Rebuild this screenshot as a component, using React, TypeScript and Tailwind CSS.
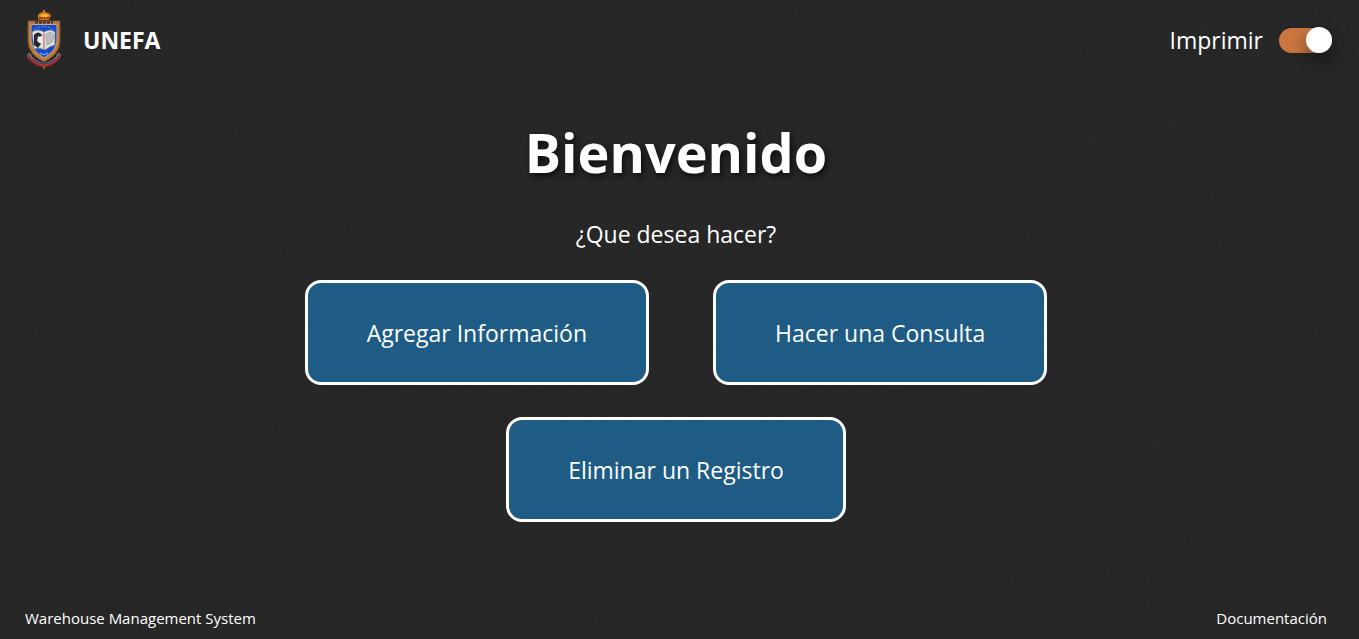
import { useState } from "react";

const actionClass =
  "flex h-[105px] items-center justify-center rounded-2xl border-3 border-white bg-[#1e5c85] px-[59px] text-[23px] leading-8 whitespace-nowrap hover:bg-[#256c9b]";

function Leather() {
  return (
    <svg className="pointer-events-none absolute inset-0 -z-10 h-full w-full" aria-hidden="true">
      <filter id="leather" x="0" y="0" width="100%" height="100%" colorInterpolationFilters="sRGB">
        <feTurbulence type="fractalNoise" baseFrequency="0.2" numOctaves="3" seed="4" result="noise" />
        <feDiffuseLighting in="noise" surfaceScale="0.22" diffuseConstant="1" lightingColor="#2d2d2d">
          <feDistantLight azimuth="235" elevation="60" />
        </feDiffuseLighting>
      </filter>
      <rect width="100%" height="100%" filter="url(#leather)" />
    </svg>
  );
}

function Crest() {
  return (
    <svg className="h-[60px] w-9" viewBox="0 0 36 60" aria-hidden="true">
      <path d="M1 44 L4 43 Q7 51 18 53 Q29 51 32 43 L35 44 Q34 50 28 53 Q18 59 8 53 Q2 50 1 44Z" fill="#b8862f" />
      <path d="M2 44 Q7 53 18 54 Q29 53 34 44" fill="none" stroke="#2b3f96" strokeWidth="1.5" />
      <path d="M2 47 Q8 55 18 56 Q28 55 34 47" fill="none" stroke="#b3202c" strokeWidth="2" />
      <path d="M13 10 Q10 5 14 3 Q16 2 17 2 L17 0 H19 V2 Q25 3 25 6 L23 10Z" fill="#cf7522" />
      <path d="M13 8 H24" stroke="#8d3420" strokeWidth="1.5" />
      <ellipse cx="18.5" cy="5.5" rx="4" ry="1.8" fill="#ffb52e" />
      <path d="M2 11 H34 V31 Q34 44 18 52 Q2 44 2 31Z" fill="#b97b42" stroke="#7c5030" />
      <path d="M5 14.5 H31 V31 Q30 41 18 48 Q6 41 5 31Z" fill="#124bd0" stroke="#d9a86c" />
      <path d="M9 12.5 H27" stroke="#382c28" strokeWidth="2" strokeDasharray="3 1" />
      <path d="M8 20 Q18 13 28 20" fill="none" stroke="#84b4ee" strokeWidth="1.2" strokeDasharray="1 2" />
      <path d="M6 22 Q12 18 18 22 Q24 18 29 22 V35 Q24 36 19 40 Q13 37 8 39Z" fill="#dfdfdc" stroke="#777" strokeWidth=".7" />
      <path d="M8 25 Q12 20 16 25 L15 28 L12 26 L11 31 L15 34 L12 38 L8 35Z" fill="#27272b" />
      <path d="M12 27 L16 26 V32 L13 33Z" fill="#eee" />
      <path d="M20 25 Q24 20 28 25 Q28 33 21 35Z" fill="#bdbdba" stroke="#999" strokeWidth=".6" />
      <path d="M18 23 V40" stroke="#b95b65" />
      <path d="M14 43 Q18 46 22 43" fill="none" stroke="#7ba9df" strokeWidth="1.2" />
      <path d="M16 56 H20 L18 60Z" fill="#a64f25" />
    </svg>
  );
}

export default function App() {
  const [print, setPrint] = useState(true);

  return (
    <div className="relative isolate flex min-h-screen flex-col bg-[#272727] font-['Open_Sans','Noto_Sans',sans-serif] text-white">
      <Leather />
      <header className="flex h-20 items-center justify-between pr-[27px] pl-[26px]">
        <a href="#" className="flex items-center gap-[21px]">
          <Crest />
          <span className="text-[23px] leading-8 font-bold">UNEFA</span>
        </a>
        <label className="flex cursor-pointer items-center gap-4 text-[23px] leading-8">
          Imprimir
          <input
            type="checkbox"
            role="switch"
            checked={print}
            onChange={(event) => setPrint(event.target.checked)}
            className="flex h-[25px] w-[53px] cursor-pointer appearance-none items-center rounded-full bg-neutral-500 before:size-[26px] before:shrink-0 before:rounded-full before:bg-white before:shadow-[0_8px_20px_rgba(0,0,0,0.5)] checked:justify-end checked:bg-[#cd7740]"
          />
        </label>
      </header>

      <main className="flex flex-1 flex-col items-center pt-8 pr-[7px]">
        <h1 className="text-[54px] leading-20 font-bold [text-shadow:2px_3px_6px_#000000b3]">Bienvenido</h1>
        <p className="mt-[26px] text-[23px] leading-8">¿Que desea hacer?</p>
        <div className="mt-[30px] flex max-w-[860px] flex-wrap justify-center gap-x-16 gap-y-8">
          <button type="button" className={actionClass}>Agregar Información</button>
          <button type="button" className={actionClass}>Hacer una Consulta</button>
          <button type="button" className={actionClass}>Eliminar un Registro</button>
        </div>
      </main>

      <footer className="flex items-center justify-between px-[25px] pt-6 pr-8 pb-[9px] text-[15px] leading-6">
        <p>Warehouse Management System</p>
        <a href="#">Documentación</a>
      </footer>
    </div>
  );
}
